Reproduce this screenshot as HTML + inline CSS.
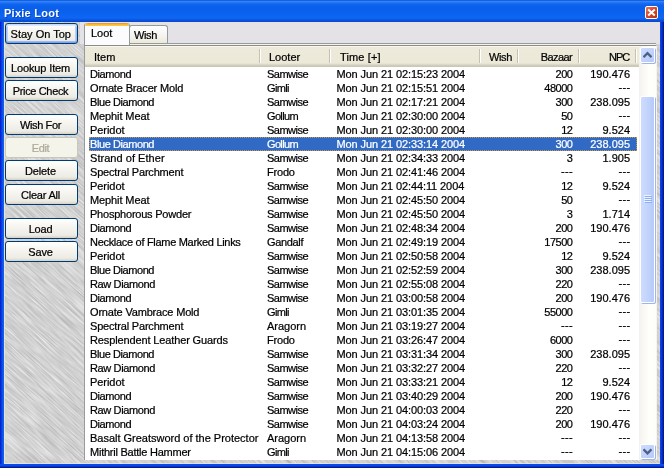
<!DOCTYPE html>
<html>
<head>
<meta charset="utf-8">
<title>Pixie Loot</title>
<style>
*{box-sizing:border-box;margin:0;padding:0}
html,body{width:664px;height:468px;overflow:hidden}
body{position:relative;background:#0550e0;font-family:"Liberation Sans",sans-serif;font-size:11px;color:#000}
.abs{position:absolute}
#list,.btn,.tab,#title .t{will-change:transform}
#list,.btn,.tab{-webkit-text-stroke:0.22px currentColor}
#title{left:0;top:0;width:664px;height:22px;background:linear-gradient(to bottom,#1660e4 0px,#1660e4 1px,#3a8cf8 1px,#2a7df6 2px,#1a70f4 3px,#0c62ec 5px,#0a5fea 9px,#0a62f0 13px,#0e66f2 18px,#0a5ae4 19.5px,#0a4ad2 21px,#0a48d0 22px)}
#title .t{left:3.5px;top:6px;color:#fff;font-weight:bold;font-size:11px;line-height:14px;letter-spacing:0.25px;white-space:nowrap;text-shadow:1px 1px 0 rgba(10,40,150,.55)}
#bl{left:0;top:22px;width:4px;height:446px;background:linear-gradient(to right,#0a22d0 0,#0a22d0 1px,#0a3ae0 1px,#0a3ae0 2px,#0a50ea 2px,#0a50ea 3px,#1060f0 3px,#1060f0 4px)}
#br{left:660px;top:22px;width:4px;height:446px;background:linear-gradient(to right,#0a44e4 0,#0a44e4 1px,#0838d0 1px,#0838d0 2px,#0428b4 2px,#0428b4 3px,#001a9a 3px,#001a9a 4px)}
#bb{left:0;top:464px;width:664px;height:4px;background:linear-gradient(to bottom,#0a4cec 0,#0a48ea 2px,#0a30c8 2px,#0a30c8 3px,#001a9a 3px,#001a9a 4px)}
#client{left:4px;top:22px;width:656px;height:442px;background:#d2d2d2;overflow:hidden}
#edge{left:4px;top:22px;width:656px;height:442px;border-left:1px solid rgba(240,234,215,.7);border-bottom:1px solid rgba(240,234,215,.7)}
#metal{left:0;top:0;width:656px;height:442px}
#strip{left:80px;top:22px;width:580px;height:22px;background:#e4e2e6}
.btn{left:5px;width:73px;height:21px;border:1px solid #003c74;border-radius:3px;background:linear-gradient(to bottom,#ffffff 0,#f6f5f0 40%,#ecebe5 85%,#d6d0c5 100%);text-align:center;line-height:21px;padding-right:2px;font-size:11px;white-space:nowrap}
.btn.dis{border-color:#c9c7ba;color:#aca899;background:#f5f4ea}
.btn.def{box-shadow:inset 0 -1px 0 #7d9fe8,inset 0 -2px 0 #9db9f0,inset 0 1px 0 #c5d9fb,inset 0 2px 0 #dbe8fd,inset 1px 0 0 #a5c0f0,inset 2px 0 0 #bcd1f6,inset -1px 0 0 #a0bcee,inset -2px 0 0 #b8cef5}

#tabline{left:84px;top:43px;width:572px;height:1px;background:#929b9e}
#tabline2{left:84px;top:44px;width:572px;height:1px;background:#f4f3ee}
.tab{white-space:nowrap;font-size:11px}
#tab1{left:84px;top:23px;width:46px;height:22px;background:#fcfcfe;border:1px solid #919b9c;border-bottom:none;border-top:none;border-radius:3px 3px 0 0;overflow:hidden}
#tab1 .o{left:0;top:0;width:46px;height:3px;background:linear-gradient(to bottom,#e68b2c 0,#ffc73c 2px,#ffc73c 3px);border-radius:3px 3px 0 0}
#tab1 .l{left:6px;top:3px;line-height:14px}
#tab2{left:129px;top:25px;width:39px;height:18px;background:linear-gradient(to bottom,#ffffff 0,#f4f3ee 60%,#ece9d8 100%);border:1px solid #919b9c;border-bottom:none;border-radius:3px 3px 0 0}
#tab2 .l{left:4px;top:2px;line-height:14px;letter-spacing:-0.4px}
#list{left:84px;top:45px;width:573px;border-right:1px solid #f4f4f0;height:415px;background:#fff;border-left:1px solid #9a9a9a;border-top:1px solid #8c8c84;overflow:hidden}
#hdr{left:0;top:0;width:554px;height:21px;background:linear-gradient(to bottom,#f8f7f0 0,#f8f7f0 1px,#edeadb 1px,#ece9d8 17px,#e3dfcf 18px,#d6d2c2 19px,#cbc7b8 20px,#cbc7b8 21px)}
#hdr span{position:absolute;top:0;line-height:22px;white-space:nowrap}
#hdr i{position:absolute;top:3px;width:2px;height:14px;background:linear-gradient(to right,#c5c2b2 0,#c5c2b2 1px,#fff 1px,#fff 2px)}
#rows{left:0;top:21px;width:554px}
.row{position:relative;height:14px;line-height:14px;white-space:nowrap}
.row span{position:absolute;top:0}
.c1{left:5px;letter-spacing:-0.25px}
.c2{left:182px;letter-spacing:-0.45px}
.c3{left:251.5px;letter-spacing:-0.1px}
.c5{right:66.6px;text-align:right;letter-spacing:-0.5px}
.c6{right:9px;text-align:right}
.row span.d{top:-1px;letter-spacing:0.35px;margin-right:-0.6px}
.row.sel{color:#fff}
.row.sel:before{content:"";position:absolute;left:4px;top:0;width:548px;height:14px;background:#316ac5;outline:1px dotted #c9963e;outline-offset:-1px}
#sb{left:554px;top:0;width:17px;height:414px;background:linear-gradient(to right,#f3f1ec 0,#f9f8f4 4px,#fefefb 10px,#fdfdfa 17px)}
.sbtn{left:1px;width:15px;height:15px;border:1px solid #fff;border-radius:2px;background:linear-gradient(135deg,#cddcfe 0,#c2d3fc 50%,#b6c8f6 100%);box-shadow:1px 1px 0 #9db5ea}
#thumb{left:1px;top:50px;width:15px;height:207px;border:1px solid #fff;border-radius:2px;background:linear-gradient(to right,#cddcfe 0,#c3d4fc 50%,#b7c9f7 100%);box-shadow:1px 1px 0 #9db5ea}

#close{left:645px;top:6px;width:13px;height:13px;border:1px solid #fff;border-radius:2px;background:linear-gradient(135deg,#e9785c 0,#d9492b 45%,#b8320f 100%)}
</style>
</head>
<body>
<div id="title" class="abs"><div class="t abs">Pixie Loot</div></div>
<div id="close" class="abs"><svg class="abs" style="left:1px;top:1px" width="9" height="9" viewBox="0 0 9 9"><path d="M1.2 1.6 L7.8 7.6 M7.8 1.6 L1.2 7.6" stroke="#fff" stroke-width="2" fill="none"/></svg></div>
<div id="client" class="abs">
<svg id="metal" class="abs" width="656" height="442">
<defs>
<filter id="brush" color-interpolation-filters="sRGB" x="0" y="0" width="100%" height="100%">
<feTurbulence type="fractalNoise" baseFrequency="0.03 0.8" numOctaves="3" seed="11" result="n"/>
<feColorMatrix type="matrix" values="0.3 0 0 0 0.67  0.3 0 0 0 0.67  0.3 0 0 0 0.67  0 0 0 0 1" />
</filter>
</defs>
<rect width="656" height="442" fill="#d4d4d4"/>
<g transform="rotate(42 328 221)"><rect x="-300" y="-300" width="1300" height="1100" fill="#fff" filter="url(#brush)"/></g>
</svg>
</div>
<div id="edge" class="abs"></div>
<div id="strip" class="abs"></div>
<div id="bl" class="abs"></div><div id="br" class="abs"></div><div id="bb" class="abs"></div>

<div class="btn abs def" style="top:23px;letter-spacing:0px;padding-right:1.5px">Stay On Top</div>
<div class="btn abs" style="top:57px;letter-spacing:-0.12px;padding-right:2px">Lookup Item</div>
<div class="btn abs" style="top:80px;letter-spacing:-0.36px">Price Check</div>
<div class="btn abs" style="top:114px;letter-spacing:-0.4px">Wish For</div>
<div class="btn abs dis" style="top:137px;letter-spacing:-0.4px">Edit</div>
<div class="btn abs" style="top:160px;letter-spacing:-0.15px">Delete</div>
<div class="btn abs" style="top:184px;letter-spacing:-0.2px">Clear All</div>
<div class="btn abs" style="top:218px;letter-spacing:-0.2px">Load</div>
<div class="btn abs" style="top:241px;letter-spacing:-0.2px">Save</div>

<div id="tabline" class="abs"></div><div id="tabline2" class="abs"></div>
<div id="tab2" class="abs tab"><div class="l abs">Wish</div></div>
<div id="tab1" class="abs tab"><div class="o abs"></div><div class="l abs">Loot</div></div>
<div id="list" class="abs">
<div id="hdr" class="abs">
<span style="left:9px">Item</span><i style="left:174px"></i>
<span style="left:184px">Looter</span><i style="left:244px"></i>
<span style="left:255px;letter-spacing:0.15px">Time [+]</span><i style="left:394px"></i>
<span style="left:404px;letter-spacing:-0.4px">Wish</span><i style="left:432px"></i>
<span style="right:66.8px;letter-spacing:-0.55px">Bazaar</span><i style="left:493px"></i>
<span style="right:9.6px;letter-spacing:-0.9px">NPC</span><i style="left:550px"></i>
</div>
<div id="rows" class="abs">
<div class="row"><span class="c1" style="letter-spacing:-0.42px">Diamond</span><span class="c2" style="letter-spacing:-0.52px">Samwise</span><span class="c3">Mon Jun 21 02:15:23 2004</span><span class="c5">200</span><span class="c6">190.476</span></div>
<div class="row"><span class="c1" style="letter-spacing:-0.15px">Ornate Bracer Mold</span><span class="c2" style="letter-spacing:-0.65px">Gimli</span><span class="c3">Mon Jun 21 02:15:51 2004</span><span class="c5">48000</span><span class="c6 d">---</span></div>
<div class="row"><span class="c1" style="letter-spacing:-0.42px">Blue Diamond</span><span class="c2" style="letter-spacing:-0.52px">Samwise</span><span class="c3">Mon Jun 21 02:17:21 2004</span><span class="c5">300</span><span class="c6">238.095</span></div>
<div class="row"><span class="c1" style="letter-spacing:-0.1px">Mephit Meat</span><span class="c2" style="letter-spacing:-0.65px">Gollum</span><span class="c3">Mon Jun 21 02:30:00 2004</span><span class="c5">50</span><span class="c6 d">---</span></div>
<div class="row"><span class="c1" style="letter-spacing:-0.06px">Peridot</span><span class="c2" style="letter-spacing:-0.52px">Samwise</span><span class="c3">Mon Jun 21 02:30:00 2004</span><span class="c5">12</span><span class="c6">9.524</span></div>
<div class="row sel"><span class="c1" style="letter-spacing:-0.42px">Blue Diamond</span><span class="c2" style="letter-spacing:-0.65px">Gollum</span><span class="c3">Mon Jun 21 02:33:14 2004</span><span class="c5">300</span><span class="c6">238.095</span></div>
<div class="row"><span class="c1" style="letter-spacing:0.04px">Strand of Ether</span><span class="c2" style="letter-spacing:-0.52px">Samwise</span><span class="c3">Mon Jun 21 02:34:33 2004</span><span class="c5">3</span><span class="c6">1.905</span></div>
<div class="row"><span class="c1" style="letter-spacing:-0.18px">Spectral Parchment</span><span class="c2" style="letter-spacing:-0.19px">Frodo</span><span class="c3">Mon Jun 21 02:41:46 2004</span><span class="c5 d">---</span><span class="c6 d">---</span></div>
<div class="row"><span class="c1" style="letter-spacing:-0.06px">Peridot</span><span class="c2" style="letter-spacing:-0.52px">Samwise</span><span class="c3">Mon Jun 21 02:44:11 2004</span><span class="c5">12</span><span class="c6">9.524</span></div>
<div class="row"><span class="c1" style="letter-spacing:-0.1px">Mephit Meat</span><span class="c2" style="letter-spacing:-0.52px">Samwise</span><span class="c3">Mon Jun 21 02:45:50 2004</span><span class="c5">50</span><span class="c6 d">---</span></div>
<div class="row"><span class="c1" style="letter-spacing:-0.22px">Phosphorous Powder</span><span class="c2" style="letter-spacing:-0.52px">Samwise</span><span class="c3">Mon Jun 21 02:45:50 2004</span><span class="c5">3</span><span class="c6">1.714</span></div>
<div class="row"><span class="c1" style="letter-spacing:-0.42px">Diamond</span><span class="c2" style="letter-spacing:-0.52px">Samwise</span><span class="c3">Mon Jun 21 02:48:34 2004</span><span class="c5">200</span><span class="c6">190.476</span></div>
<div class="row"><span class="c1" style="letter-spacing:-0.3px">Necklace of Flame Marked Links</span><span class="c2" style="letter-spacing:-0.34px">Gandalf</span><span class="c3">Mon Jun 21 02:49:19 2004</span><span class="c5">17500</span><span class="c6 d">---</span></div>
<div class="row"><span class="c1" style="letter-spacing:-0.06px">Peridot</span><span class="c2" style="letter-spacing:-0.52px">Samwise</span><span class="c3">Mon Jun 21 02:50:58 2004</span><span class="c5">12</span><span class="c6">9.524</span></div>
<div class="row"><span class="c1" style="letter-spacing:-0.42px">Blue Diamond</span><span class="c2" style="letter-spacing:-0.52px">Samwise</span><span class="c3">Mon Jun 21 02:52:59 2004</span><span class="c5">300</span><span class="c6">238.095</span></div>
<div class="row"><span class="c1" style="letter-spacing:-0.36px">Raw Diamond</span><span class="c2" style="letter-spacing:-0.52px">Samwise</span><span class="c3">Mon Jun 21 02:55:08 2004</span><span class="c5">220</span><span class="c6 d">---</span></div>
<div class="row"><span class="c1" style="letter-spacing:-0.42px">Diamond</span><span class="c2" style="letter-spacing:-0.52px">Samwise</span><span class="c3">Mon Jun 21 03:00:58 2004</span><span class="c5">200</span><span class="c6">190.476</span></div>
<div class="row"><span class="c1" style="letter-spacing:-0.18px">Ornate Vambrace Mold</span><span class="c2" style="letter-spacing:-0.65px">Gimli</span><span class="c3">Mon Jun 21 03:01:35 2004</span><span class="c5">55000</span><span class="c6 d">---</span></div>
<div class="row"><span class="c1" style="letter-spacing:-0.18px">Spectral Parchment</span><span class="c2" style="letter-spacing:-0.02px">Aragorn</span><span class="c3">Mon Jun 21 03:19:27 2004</span><span class="c5 d">---</span><span class="c6 d">---</span></div>
<div class="row"><span class="c1" style="letter-spacing:-0.13px">Resplendent Leather Guards</span><span class="c2" style="letter-spacing:-0.19px">Frodo</span><span class="c3">Mon Jun 21 03:26:47 2004</span><span class="c5">6000</span><span class="c6 d">---</span></div>
<div class="row"><span class="c1" style="letter-spacing:-0.42px">Blue Diamond</span><span class="c2" style="letter-spacing:-0.52px">Samwise</span><span class="c3">Mon Jun 21 03:31:34 2004</span><span class="c5">300</span><span class="c6">238.095</span></div>
<div class="row"><span class="c1" style="letter-spacing:-0.36px">Raw Diamond</span><span class="c2" style="letter-spacing:-0.52px">Samwise</span><span class="c3">Mon Jun 21 03:32:27 2004</span><span class="c5">220</span><span class="c6 d">---</span></div>
<div class="row"><span class="c1" style="letter-spacing:-0.06px">Peridot</span><span class="c2" style="letter-spacing:-0.52px">Samwise</span><span class="c3">Mon Jun 21 03:33:21 2004</span><span class="c5">12</span><span class="c6">9.524</span></div>
<div class="row"><span class="c1" style="letter-spacing:-0.42px">Diamond</span><span class="c2" style="letter-spacing:-0.52px">Samwise</span><span class="c3">Mon Jun 21 03:40:29 2004</span><span class="c5">200</span><span class="c6">190.476</span></div>
<div class="row"><span class="c1" style="letter-spacing:-0.36px">Raw Diamond</span><span class="c2" style="letter-spacing:-0.52px">Samwise</span><span class="c3">Mon Jun 21 04:00:03 2004</span><span class="c5">220</span><span class="c6 d">---</span></div>
<div class="row"><span class="c1" style="letter-spacing:-0.42px">Diamond</span><span class="c2" style="letter-spacing:-0.52px">Samwise</span><span class="c3">Mon Jun 21 04:03:24 2004</span><span class="c5">200</span><span class="c6">190.476</span></div>
<div class="row"><span class="c1" style="letter-spacing:-0.01px">Basalt Greatsword of the Protector</span><span class="c2" style="letter-spacing:-0.02px">Aragorn</span><span class="c3">Mon Jun 21 04:13:58 2004</span><span class="c5 d">---</span><span class="c6 d">---</span></div>
<div class="row"><span class="c1" style="letter-spacing:-0.24px">Mithril Battle Hammer</span><span class="c2" style="letter-spacing:-0.65px">Gimli</span><span class="c3">Mon Jun 21 04:15:06 2004</span><span class="c5 d">---</span><span class="c6 d">---</span></div>
</div>
<div id="sb" class="abs">
<div class="sbtn abs" style="top:1px;height:16px"><svg class="abs" style="left:2px;top:3px" width="9" height="7" viewBox="0 0 9 7"><path d="M0.5 6.2 L4.5 2.2 L8.5 6.2" fill="none" stroke="#4d6185" stroke-width="2.3"/></svg></div>
<div id="thumb" class="abs"><svg class="abs" style="left:3px;top:98px" width="8" height="8" viewBox="0 0 8 8"><path d="M0 0.5H7M0 2.5H7M0 4.5H7M0 6.5H7" stroke="#eef4fe" stroke-width="1"/><path d="M1 1.5H8M1 3.5H8M1 5.5H8M1 7.5H8" stroke="#8cb0f8" stroke-width="1"/></svg></div>
<div class="sbtn abs" style="top:398px"><svg class="abs" style="left:2px;top:3px" width="9" height="7" viewBox="0 0 9 7"><path d="M0.5 1.3 L4.5 5.3 L8.5 1.3" fill="none" stroke="#4d6185" stroke-width="2.3"/></svg></div>
</div>
</div>
</body>
</html>
